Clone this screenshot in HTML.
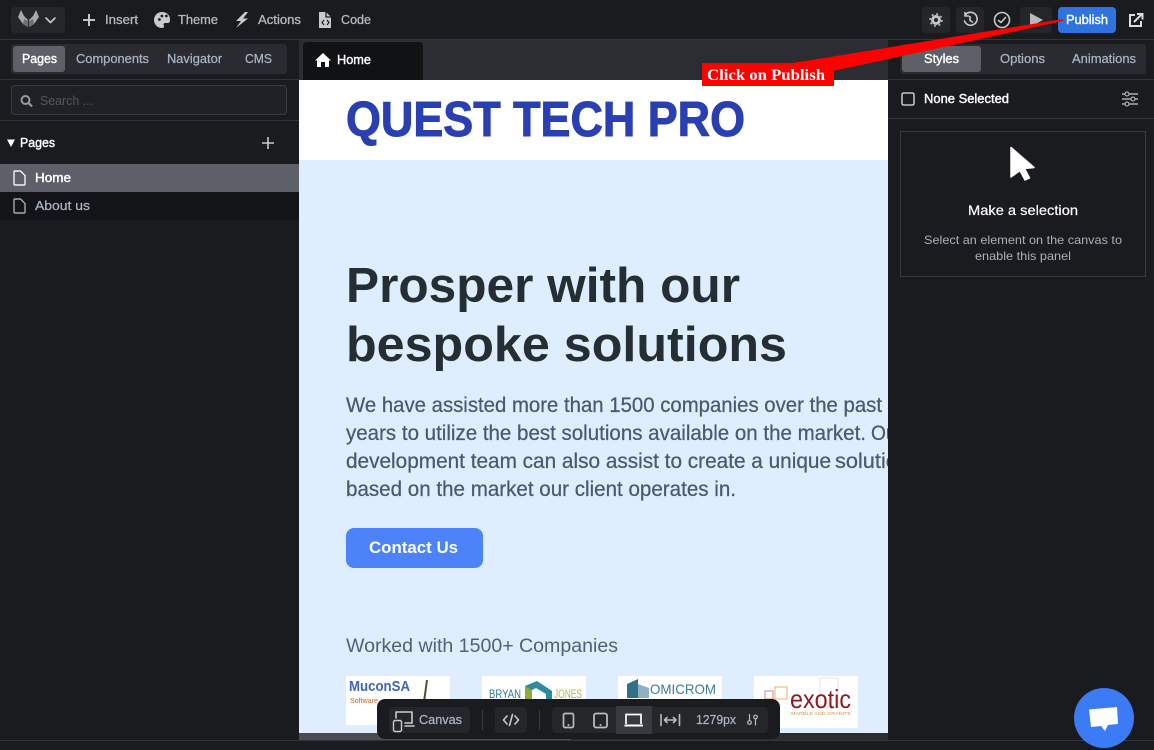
<!DOCTYPE html>
<html lang="en">
<head>
<meta charset="utf-8">
<title>Home</title>
<style>
html,body{margin:0;padding:0;width:1154px;height:750px;overflow:hidden;background:#1a1b1f}
svg{display:block}
text{font-family:"Liberation Sans",sans-serif}
.m{font-weight:400;font-size:13px}
.g{fill:#b5b8bd;stroke:#b5b8bd;stroke-width:.3px}
.b{fill:#a9b4c4;stroke:#a9b4c4;stroke-width:.25px}
.w{fill:#fff;stroke:#fff;stroke-width:.4px}
.i{fill:none;stroke:#c8cacd;stroke-width:1.6;stroke-linecap:round;stroke-linejoin:round}
.p{stroke:#4d5a65;stroke-width:.25px}
</style>
</head>
<body>
<svg width="1154" height="750" viewBox="0 0 1154 750" xmlns="http://www.w3.org/2000/svg">
<defs>
<clipPath id="cv"><rect x="299" y="80" width="589" height="653"/></clipPath>
</defs>
<rect width="1154" height="750" fill="#1a1b1f"/>

<!-- canvas -->
<g clip-path="url(#cv)">
<rect x="299" y="80" width="589" height="80" fill="#fff"/>
<rect x="299" y="160" width="589" height="573" fill="#deeeff"/>
<text x="346" y="136" font-size="49" font-weight="700" fill="#2a3fb1" stroke="#2a3fb1" stroke-width="1" textLength="399" lengthAdjust="spacingAndGlyphs">QUEST TECH PRO</text>
<text x="346" y="302" font-size="49" font-weight="700" fill="#252e33" textLength="394" lengthAdjust="spacingAndGlyphs">Prosper with our</text>
<text x="346" y="361" font-size="49" font-weight="700" fill="#252e33" textLength="441" lengthAdjust="spacingAndGlyphs">bespoke solutions</text>
<g font-size="21" fill="#4d5a65" class="p">
<text x="346" y="412" textLength="536" lengthAdjust="spacingAndGlyphs">We have assisted more than 1500 companies over the past</text>
<text x="887" y="412">5</text>
<text x="346" y="440" textLength="520" lengthAdjust="spacingAndGlyphs">years to utilize the best solutions available on the market.</text>
<text x="871" y="440" textLength="32" lengthAdjust="spacingAndGlyphs">Our</text>
<text x="346" y="468" textLength="485" lengthAdjust="spacingAndGlyphs">development team can also assist to create a unique</text>
<text x="835" y="468" textLength="75" lengthAdjust="spacingAndGlyphs">solution</text>
<text x="346" y="496" textLength="390" lengthAdjust="spacingAndGlyphs">based on the market our client operates in.</text>
</g>
<rect x="346" y="528" width="137" height="40" rx="8" fill="#4d83f9"/>
<text x="369" y="553" font-size="17" font-weight="700" fill="#fff" textLength="89" lengthAdjust="spacingAndGlyphs">Contact Us</text>
<text x="346" y="652" font-size="19" fill="#54626e" textLength="272" lengthAdjust="spacingAndGlyphs">Worked with 1500+ Companies</text>

<!-- logos -->
<rect x="346" y="676" width="104" height="49" fill="#fff"/>
<text x="349" y="691" font-size="15" font-weight="700" fill="#3f66b4" textLength="61" lengthAdjust="spacingAndGlyphs">MuconSA</text>
<text x="350" y="703" font-size="7" fill="#c8642a" textLength="28" lengthAdjust="spacingAndGlyphs">Software</text>
<path d="M427 680L424 702" stroke="#5b4a35" stroke-width="2" fill="none"/>
<rect x="482" y="676" width="104" height="49" fill="#fff"/>
<text x="489" y="698" font-size="12" fill="#2c7d8f" textLength="32" lengthAdjust="spacingAndGlyphs">BRYAN</text>
<text x="554" y="698" font-size="12" fill="#a8bb4a" textLength="28" lengthAdjust="spacingAndGlyphs">JONES</text>
<path d="M525 686L537 681L552 691V702L546 702V694L536 688L530 691Z" fill="#2f8aa0"/>
<path d="M525 686V706L532 702V690Z" fill="#8cab3c"/>
<rect x="618" y="676" width="104" height="49" fill="#fff"/>
<path d="M627 684L638 679V698H627Z" fill="#2f7189"/>
<path d="M638 684L649 688V698H638Z" fill="#8fb1bf"/>
<text x="650" y="694" font-size="14" fill="#3a7e98" textLength="66" lengthAdjust="spacingAndGlyphs">OMICROM</text>
<rect x="754" y="676" width="104" height="52" fill="#fff"/>
<rect x="765" y="691" width="8" height="8" fill="none" stroke="#c9898d"/>
<rect x="775" y="687" width="12" height="12" fill="none" stroke="#e0b56a"/>
<rect x="820" y="678" width="18" height="30" fill="none" stroke="#f2e2de"/>
<text x="790" y="708" font-size="26" fill="#8e1b20" textLength="61" lengthAdjust="spacingAndGlyphs">exotic</text>
<text x="791" y="715" font-size="4.5" fill="#c79a45" textLength="60" lengthAdjust="spacingAndGlyphs">MARBLE AND GRANITE</text>
</g>

<!-- bottom scrollbar -->
<rect x="299" y="733" width="589" height="7" fill="#2c2d31"/>
<rect x="299" y="733" width="272" height="7" fill="#4b4c51"/>
<rect x="0" y="740" width="1154" height="1" fill="#34353a"/>

<!-- top bar -->
<rect x="0" y="0" width="1154" height="39" fill="#1a1b1f"/>
<rect x="0" y="39" width="1154" height="1" fill="#34353a"/>
<rect x="11" y="7" width="54" height="26" rx="4" fill="#25262a"/>
<path d="M21 10L24 16L28 20V27L23 24L18 17Z" fill="#a8a8a8"/>
<path d="M36 10L33 16L29 20V27L34 24L39 17Z" fill="#a8a8a8"/>
<path d="M24 19L28 21V27L23 24Z M33 19L29 21V27L34 24Z" fill="#6f7074"/>
<path class="i" d="M46 18L50.500 22.500L55 18"/>
<path d="M89 14V26M83 20H95" fill="none" stroke="#d8d9da" stroke-width="1.800"/>
<text x="105" y="24" class="m g" textLength="33" lengthAdjust="spacingAndGlyphs">Insert</text>
<path fill="#c8cacd" fill-rule="evenodd" d="M162 12C157 12 154 16 154 20C154 24.500 157.500 28 162 28C164 28 164.500 26.500 163.800 25.500C163 24 164 23 165.500 23H168C170 23 170 20.500 170 19.500C170 15 166.500 12 162 12ZM158 19.500A1.400 1.400 0 1 0 158 19.490ZM160.500 16A1.400 1.400 0 1 0 160.500 15.990ZM165 16A1.400 1.400 0 1 0 165 15.990Z"/>
<text x="178" y="24" class="m g" textLength="40" lengthAdjust="spacingAndGlyphs">Theme</text>
<path fill="#c8cacd" d="M245 12L236 21H241L236 28L248 18.500H243L248 12Z"/>
<text x="258" y="24" class="m g" textLength="43" lengthAdjust="spacingAndGlyphs">Actions</text>
<path fill="#c8cacd" d="M319 12H326L331 17V28H319Z"/>
<path fill="none" stroke="#1a1b1f" stroke-width="1.200" d="M324 20L322 22.500L324 25M327 20L329 22.500L327 25M326 12V17H331"/>
<text x="341" y="24" class="m g" textLength="30" lengthAdjust="spacingAndGlyphs">Code</text>

<!-- right controls -->
<rect x="922" y="7" width="28" height="26" rx="4" fill="#25262a"/>
<circle cx="936" cy="20" r="3.500" fill="none" stroke="#c2c3c6" stroke-width="3"/>
<circle cx="936" cy="20" r="6" fill="none" stroke="#c2c3c6" stroke-width="1.500" stroke-dasharray="2 2.700"/>
<rect x="956" y="7" width="28" height="26" rx="4" fill="#25262a"/>
<path class="i" d="M965 15.500A6.500 6.500 0 1 1 964.500 21M965 12.500V16H968.500M970 16.500V20.500L972.500 22"/>
<circle cx="1002" cy="20" r="7.500" class="i"/>
<path class="i" d="M998.500 20.500L1001 22.500L1005.500 17.500"/>
<rect x="1020" y="7" width="32" height="26" rx="4" fill="#25262a"/>
<path d="M1030 13L1043 20L1030 27Z" fill="#b9babd"/>
<rect x="1058" y="7" width="58" height="26" rx="4" fill="#2f73de"/>
<text x="1066" y="24" class="m w" textLength="42" lengthAdjust="spacingAndGlyphs">Publish</text>
<path fill="none" stroke="#dcdddf" stroke-width="2" d="M1135 15H1130V26H1141V21M1134 22L1142 14M1137 14H1142.500V19.500"/>

<!-- left panel -->
<rect x="0" y="40" width="299" height="700" fill="#1a1b1f"/>
<rect x="0" y="79" width="299" height="1" fill="#33343a"/>
<rect x="11" y="44" width="276" height="30" rx="3" fill="#2a2b30"/>
<rect x="13" y="46" width="52" height="26" rx="3" fill="#5d6067"/>
<text x="22" y="63" class="m w" textLength="35" lengthAdjust="spacingAndGlyphs">Pages</text>
<text x="76" y="63" class="m b" textLength="73" lengthAdjust="spacingAndGlyphs">Components</text>
<text x="167" y="63" class="m b" textLength="55" lengthAdjust="spacingAndGlyphs">Navigator</text>
<text x="245" y="63" class="m b" textLength="27" lengthAdjust="spacingAndGlyphs">CMS</text>
<rect x="11.500" y="85.500" width="275" height="29" rx="3" fill="#202126" stroke="#3b3c41"/>
<circle cx="25.500" cy="100" r="4" fill="none" stroke="#96989c" stroke-width="2"/>
<path d="M28.500 103L32 106.500" stroke="#96989c" stroke-width="2.200"/>
<text x="40" y="105" font-size="12.500" fill="#54565c" textLength="53" lengthAdjust="spacingAndGlyphs">Search ...</text>
<rect x="0" y="120" width="299" height="1" fill="#33343a"/>
<path d="M7 139.500H15L11 147Z" fill="#fff"/>
<text x="20" y="147" class="m w" textLength="35" lengthAdjust="spacingAndGlyphs">Pages</text>
<path d="M268 137V149M262 143H274" stroke="#c9cacc" stroke-width="1.600" fill="none"/>
<rect x="0" y="164" width="299" height="28" fill="#5d6068"/>
<rect x="0" y="192" width="299" height="28" fill="#131417"/>
<path fill="none" stroke="#f3f3f4" stroke-width="1.400" stroke-linejoin="round" d="M14.500 171H20.500L25 175.500V184C25 184.700 24.500 185 24 185H15C14.500 185 14 184.700 14 184V171.500Z"/>
<text x="35" y="182" class="m w" textLength="36" lengthAdjust="spacingAndGlyphs">Home</text>
<path fill="none" stroke="#a6a8ab" stroke-width="1.400" stroke-linejoin="round" d="M14.500 199H20.500L25 203.500V212C25 212.700 24.500 213 24 213H15C14.500 213 14 212.700 14 212V199.500Z"/>
<text x="35" y="210" class="m b" textLength="55" lengthAdjust="spacingAndGlyphs">About us</text>

<!-- center tab strip -->
<rect x="299" y="40" width="589" height="40" fill="#2c2d32"/>
<path d="M303 80V46Q303 42 307 42H419Q423 42 423 46V80Z" fill="#111214"/>
<path fill="#fff" d="M323 53L331 60.500H329V67H325V62H321V67H317V60.500H315Z"/>
<text x="337" y="64" class="m w" textLength="34" lengthAdjust="spacingAndGlyphs">Home</text>

<!-- right panel -->
<rect x="888" y="40" width="266" height="700" fill="#1a1b1f"/>
<rect x="888" y="79" width="266" height="1" fill="#33343a"/>
<rect x="900" y="44" width="246" height="30" rx="3" fill="#2a2b30"/>
<rect x="902" y="46" width="79" height="26" rx="3" fill="#5d6067"/>
<text x="924" y="63" class="m w" textLength="35" lengthAdjust="spacingAndGlyphs">Styles</text>
<text x="1000" y="63" class="m b" textLength="45" lengthAdjust="spacingAndGlyphs">Options</text>
<text x="1072" y="63" class="m b" textLength="64" lengthAdjust="spacingAndGlyphs">Animations</text>
<rect x="902" y="93" width="12" height="12" rx="1.500" fill="none" stroke="#e6e6e7" stroke-width="1.300"/>
<text x="924" y="103" class="m w" textLength="85" lengthAdjust="spacingAndGlyphs">None Selected</text>
<path fill="none" stroke="#c8cacd" stroke-width="1.200" d="M1122 94H1138M1122 99H1138M1122 104H1138"/>
<circle cx="1127" cy="94" r="2" fill="#1a1b1f" stroke="#c8cacd"/>
<circle cx="1133" cy="99" r="2" fill="#1a1b1f" stroke="#c8cacd"/>
<circle cx="1127" cy="104" r="2" fill="#1a1b1f" stroke="#c8cacd"/>
<rect x="888" y="118" width="266" height="1" fill="#33343a"/>
<rect x="900.500" y="131.500" width="245" height="145" fill="none" stroke="#393a3f"/>
<path fill="#fff" stroke="#fff" stroke-width="1.500" stroke-linejoin="round" d="M1011 147.500L1034 167.500L1024.500 168.500L1029.500 178L1025 180L1020 170.500L1011 177Z"/>
<text x="968" y="215" font-size="14" fill="#fff" stroke="#fff" stroke-width=".2" textLength="110" lengthAdjust="spacingAndGlyphs">Make a selection</text>
<text x="924" y="244" font-size="12" fill="#a9b0ba" textLength="198" lengthAdjust="spacingAndGlyphs">Select an element on the canvas to</text>
<text x="975" y="260" font-size="12" fill="#a9b0ba" textLength="96" lengthAdjust="spacingAndGlyphs">enable this panel</text>

<!-- bottom toolbar -->
<rect x="377" y="699" width="403" height="40" rx="8" fill="#1a1b1f"/>
<rect x="389" y="707" width="81" height="26" rx="4" fill="#25262a"/>
<path class="i" d="M396 718V712H412V723H405M405 726H414"/>
<rect x="393.500" y="720.500" width="8" height="11" rx="1.500" fill="#25262a" stroke="#c8cacd" stroke-width="1.400"/>
<text x="419" y="724" class="m b" textLength="43" lengthAdjust="spacingAndGlyphs">Canvas</text>
<rect x="482" y="710" width="1" height="20" fill="#3a3b40"/>
<rect x="495" y="707" width="32" height="26" rx="4" fill="#25262a"/>
<path class="i" d="M507 716L503.500 720L507 724M515 716L518.500 720L515 724M512.500 714.500L509.500 725.500"/>
<rect x="539" y="710" width="1" height="20" fill="#3a3b40"/>
<rect x="552" y="707" width="216" height="26" rx="4" fill="#25262a"/>
<rect x="563.500" y="713.500" width="10" height="14" rx="1.500" fill="none" stroke="#b9bbbe" stroke-width="1.700"/>
<circle cx="568.500" cy="725" r="1" fill="#b9bbbe"/>
<rect x="594" y="713.500" width="13" height="14" rx="2" fill="none" stroke="#b9bbbe" stroke-width="1.800"/>
<circle cx="600.500" cy="725" r="1" fill="#b9bbbe"/>
<rect x="616" y="706" width="36" height="28" fill="#373a40"/>
<path fill="none" stroke="#fff" stroke-width="1.700" d="M626 724V714.500H641V724"/>
<path fill="none" stroke="#fff" stroke-width="2" d="M624.500 725.500H643"/>
<path class="i" style="stroke:#b9bbbe" d="M661 714.500V725.500M679.500 714.500V725.500M664.500 720H676M667 717.500L664.500 720L667 722.500M673.500 717.500L676 720L673.500 722.500"/>
<text x="696" y="724" class="m b" textLength="40" lengthAdjust="spacingAndGlyphs">1279px</text>
<circle cx="749.500" cy="722.500" r="1.800" fill="none" stroke="#b9bbbe" stroke-width="1.200"/>
<circle cx="755.500" cy="717" r="1.800" fill="none" stroke="#b9bbbe" stroke-width="1.200"/>
<path fill="none" stroke="#b9bbbe" stroke-width="1.200" d="M749.500 714V720.500M755.500 719V725.500"/>

<!-- red annotation -->
<polygon points="1063,19 1063,21 833,71 787,64" fill="#ff0000"/>
<rect x="702" y="63" width="132" height="23" fill="#ff0000"/>
<text x="707" y="80" font-size="16" font-weight="700" fill="#fff" textLength="118" lengthAdjust="spacingAndGlyphs" style="font-family:'Liberation Serif',serif">Click on Publish</text>

<!-- chat bubble -->
<circle cx="1104" cy="718" r="30" fill="#3c7bf6"/>
<polygon points="1089,709.500 1117,707 1118,724 1108,725 1105,731 1101,726 1091,727" fill="#fff"/>
</svg>
</body>
</html>
